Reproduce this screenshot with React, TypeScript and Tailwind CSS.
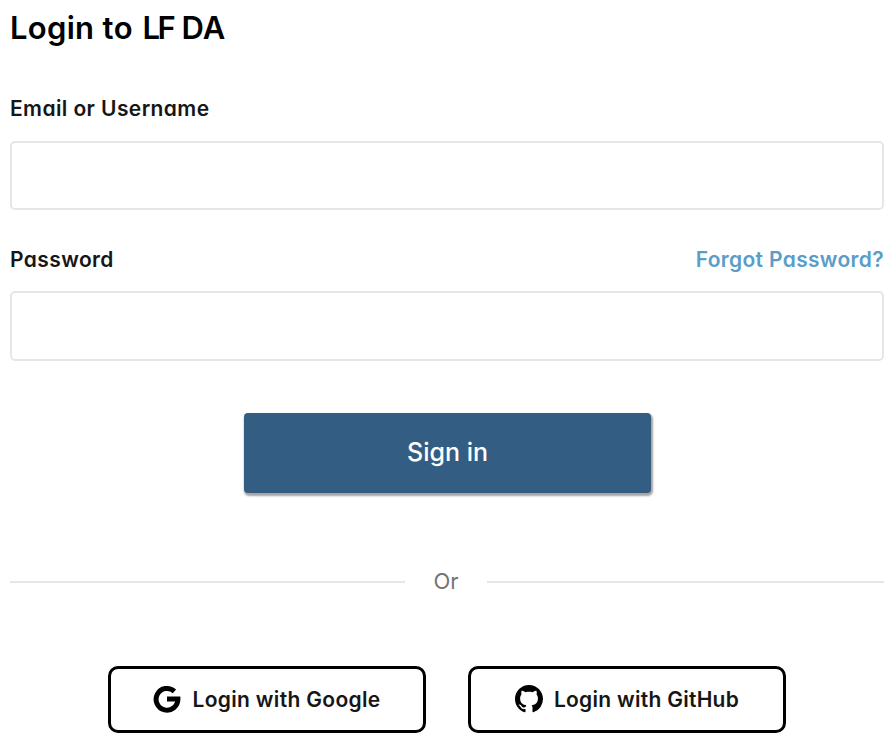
import type { ReactNode } from "react";

function GoogleMark() {
  return (
    <svg width="28" height="28" viewBox="0 0 28 28" fill="none" stroke="#000" strokeWidth="5" className="shrink-0">
      <path d="M21.4 6.3A10.9 10.9 0 1 0 24.9 14.1H14" />
    </svg>
  );
}

function GitHubMark() {
  return (
    <svg width="28" height="28" viewBox="0 0 16 16" fill="#000" className="shrink-0">
      <path d="M8 0C3.58 0 0 3.58 0 8c0 3.54 2.29 6.53 5.47 7.59.4.07.55-.17.55-.38 0-.19-.01-.82-.01-1.49-2.01.37-2.53-.49-2.69-.94-.09-.23-.48-.94-.82-1.13-.28-.15-.68-.52-.01-.53.63-.01 1.08.58 1.23.82.72 1.21 1.87.87 2.33.66.07-.52.28-.87.51-1.07-1.78-.2-3.64-.89-3.64-3.95 0-.87.31-1.59.82-2.15-.08-.2-.36-1.02.08-2.12 0 0 .67-.21 2.2.82.64-.18 1.32-.27 2-.27s1.36.09 2 .27c1.53-1.04 2.2-.82 2.2-.82.44 1.1.16 1.92.08 2.12.51.56.82 1.27.82 2.15 0 3.07-1.87 3.75-3.65 3.95.29.25.54.73.54 1.48 0 1.07-.01 1.93-.01 2.2 0 .21.15.46.55.38A8.01 8.01 0 0 0 16 8c0-4.42-3.58-8-8-8z" />
    </svg>
  );
}

function Label({ children }: { children: ReactNode }) {
  return <label className="text-[21px] font-semibold leading-7 tracking-[0.4px] text-[#161616]">{children}</label>;
}

function SocialButton({ icon, children }: { icon: ReactNode; children: ReactNode }) {
  return (
    <button className="flex h-[67px] w-[318px] items-center justify-center rounded-[10px] border-[3px] border-black bg-white pb-px text-[21px] font-semibold text-[#161616]">
      {icon}
      {children}
    </button>
  );
}

export default function App() {
  return (
    <main className="h-[750px] w-[896px] overflow-hidden bg-white pr-3 pl-[10px] font-[Inter,sans-serif] [font-feature-settings:'cv11']">
      <h1 className="flex pt-2 text-[31px] leading-10 font-semibold whitespace-pre text-black">
        <span className="w-[92.5px] tracking-[0.3px]">Login </span>
        <span className="w-10 tracking-[0.6px]">to </span>
        <span className="w-[39px] tracking-[-2.5px]">LF </span>
        <span>DA</span>
      </h1>
      <div className="mt-[47px] flex h-7">
        <Label>Email or Username</Label>
      </div>
      <input aria-label="Email or Username" className="mt-[18px] block h-[69px] w-full rounded-[5px] border-2 border-[#e6e6e6] bg-white px-4 text-xl outline-none" />
      <div className="mt-9 flex h-7 justify-between">
        <Label>Password</Label>
        <a className="text-[21px] leading-7 font-semibold tracking-[0.33px] text-[#5b9dc9]">Forgot Password?</a>
      </div>
      <input aria-label="Password" type="password" className="mt-[17px] block h-[70px] w-full rounded-[5px] border-2 border-[#e6e6e6] bg-white px-4 text-xl outline-none" />
      <button className="mt-[52px] ml-[234px] flex h-[80px] w-[407px] items-center justify-center rounded-[4px] bg-[#335d82] pb-px text-[25px] font-medium text-white shadow-[1px_2px_2px_1px_#aaa3a0]">
        Sign in
      </button>
      <div className="mt-[75px] flex h-7 items-center">
        <div className="h-[2px] w-[395px] bg-[#e6e6e6]" />
        <span className="w-[82px] pb-px text-center text-[22px] text-[#757575]">Or</span>
        <div className="h-[2px] flex-1 bg-[#e6e6e6]" />
      </div>
      <div className="mt-[70px] ml-[98px] flex gap-[42px]">
        <SocialButton icon={<GoogleMark />}><span className="ml-[11px] pt-[2px] tracking-[0.33px]">Login with Google</span></SocialButton>
        <SocialButton icon={<GitHubMark />}><span className="ml-[11px] pt-[2px] tracking-[0.28px]">Login with GitHub</span></SocialButton>
      </div>
    </main>
  );
}
